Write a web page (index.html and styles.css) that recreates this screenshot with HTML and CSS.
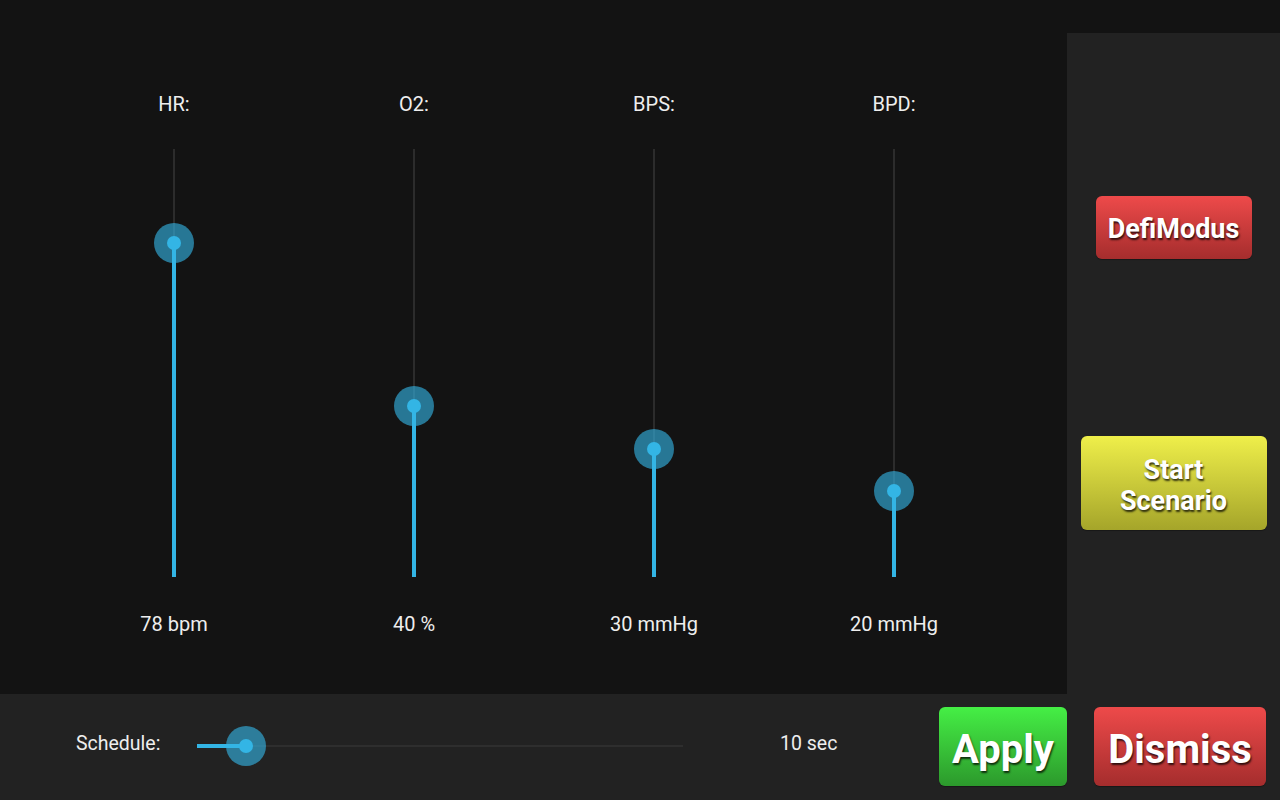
FILE: index.html
```html
<!DOCTYPE html>
<html>
<head>
<meta charset="utf-8">
<link rel="stylesheet" href="styles.css">
</head>
<body>
<div class="screen">
  <div class="topbar"></div>
  <div class="main">
    <div class="vslider">
      <div class="vlabel">HR:</div>
      <div class="vtrack">
        <div class="rail"></div>
        <div class="fill" style="height:78%"></div>
        <div class="thumb" style="bottom:78%"></div>
      </div>
      <div class="vvalue">78 bpm</div>
    </div>
    <div class="vslider">
      <div class="vlabel">O2:</div>
      <div class="vtrack">
        <div class="rail"></div>
        <div class="fill" style="height:40%"></div>
        <div class="thumb" style="bottom:40%"></div>
      </div>
      <div class="vvalue">40 %</div>
    </div>
    <div class="vslider">
      <div class="vlabel">BPS:</div>
      <div class="vtrack">
        <div class="rail"></div>
        <div class="fill" style="height:30%"></div>
        <div class="thumb" style="bottom:30%"></div>
      </div>
      <div class="vvalue">30 mmHg</div>
    </div>
    <div class="vslider">
      <div class="vlabel">BPD:</div>
      <div class="vtrack">
        <div class="rail"></div>
        <div class="fill" style="height:20%"></div>
        <div class="thumb" style="bottom:20%"></div>
      </div>
      <div class="vvalue">20 mmHg</div>
    </div>
  </div>
  <div class="side">
    <button class="btn btn-red btn-defi">DefiModus</button>
    <button class="btn btn-yellow btn-start">Start<br>Scenario</button>
  </div>
  <div class="bottom">
    <div class="sched-label">Schedule:</div>
    <div class="htrack">
      <div class="hrail"></div>
      <div class="hfill" style="width:10%"></div>
      <div class="hthumb" style="left:10%"></div>
    </div>
    <div class="sched-value">10 sec</div>
    <button class="btn btn-green btn-apply">Apply</button>
    <button class="btn btn-red btn-dismiss">Dismiss</button>
  </div>
</div>
</body>
</html>
```

FILE: styles.css
```css
* { box-sizing: border-box; }
html, body { margin: 0; padding: 0; }
body {
  width: 1280px;
  height: 800px;
  overflow: hidden;
  background: #131313;
  font-family: Roboto, "Liberation Sans", sans-serif;
  color: #eeeeee;
}
.screen {
  width: 1280px;
  height: 800px;
  display: grid;
  grid-template-columns: 1067px 213px;
  grid-template-rows: 33px 661px 106px;
  background: #131313;
}
.topbar {
  grid-column: 1 / 3;
  background: #131313;
}
.main {
  grid-column: 1;
  grid-row: 2;
  display: flex;
  padding-left: 54px;
  padding-top: 59px;
}
.vslider {
  width: 240px;
  display: flex;
  flex-direction: column;
  align-items: center;
}
.vlabel, .vvalue {
  font-size: 20px;
  line-height: 24px;
  height: 24px;
  white-space: nowrap;
}
.vlabel { margin-bottom: 33px; }
.vvalue { margin-top: 34px; padding-top: 1px; }
.vtrack {
  position: relative;
  width: 40px;
  height: 428px;
}
.rail {
  position: absolute;
  left: 19px;
  top: 0;
  bottom: 0;
  width: 2px;
  background: #2c2c2c;
}
.fill {
  position: absolute;
  left: 18px;
  bottom: 0;
  width: 4px;
  background: #33b5e5;
}
.thumb {
  position: absolute;
  left: 0;
  width: 40px;
  height: 40px;
  margin-bottom: -20px;
  border-radius: 50%;
  background: rgba(51, 181, 229, 0.62);
}
.thumb::after, .hthumb::after {
  content: "";
  position: absolute;
  left: 13px;
  top: 13px;
  width: 14px;
  height: 14px;
  border-radius: 50%;
  background: #33b5e5;
}
.side {
  grid-column: 2;
  grid-row: 2;
  background: #222222;
  display: flex;
  flex-direction: column;
  align-items: center;
  padding-top: 163px;
  gap: 177px;
}
.bottom {
  grid-column: 1 / 3;
  grid-row: 3;
  background: #222222;
  display: flex;
  align-items: center;
  padding-left: 76px;
}
.sched-label {
  font-size: 19.5px;
  line-height: 24px;
  width: 84px;
  margin-top: -6px;
  white-space: nowrap;
}
.htrack {
  position: relative;
  width: 486px;
  height: 40px;
  margin-left: 37px;
  margin-top: -2px;
}
.hrail {
  position: absolute;
  left: 0;
  right: 0;
  top: 19px;
  height: 2px;
  background: #2e2e2e;
}
.hfill {
  position: absolute;
  left: 0;
  top: 18px;
  height: 4px;
  background: #33b5e5;
}
.hthumb {
  position: absolute;
  top: 0;
  width: 40px;
  height: 40px;
  margin-left: -20px;
  border-radius: 50%;
  background: rgba(51, 181, 229, 0.62);
}
.sched-value {
  font-size: 19.5px;
  line-height: 24px;
  margin-left: 97px;
  width: 57px;
  margin-top: -6px;
  white-space: nowrap;
}
.btn {
  border: none;
  border-radius: 6px;
  color: #ffffff;
  font-family: Roboto, "Liberation Sans", sans-serif;
  font-weight: bold;
  text-shadow: 1px 2px 2px rgba(0, 0, 0, 0.75);
  padding: 0;
  text-align: center;
  box-shadow: 0 1px 1px rgba(0,0,0,0.3);
  flex-shrink: 0;
}
.btn-red { background: linear-gradient(#ee4a4a, #a52d2d); }
.btn-yellow { background: linear-gradient(#efef4a, #a5a52a); }
.btn-green { background: linear-gradient(#45ef45, #2c992c); }
.btn-defi {
  width: 156px;
  height: 63px;
  font-size: 27px;
  padding-top: 2px;
}
.btn-start {
  width: 186px;
  height: 94px;
  font-size: 27px;
  line-height: 31px;
  padding-top: 5px;
}
.btn-apply {
  width: 128px;
  height: 79px;
  font-size: 40px;
  margin-left: 102px;
  margin-top: -1px;
  padding-top: 5px;
}
.btn-dismiss {
  width: 172px;
  height: 79px;
  font-size: 40px;
  margin-left: 27px;
  margin-top: -1px;
  padding-top: 5px;
}
```
